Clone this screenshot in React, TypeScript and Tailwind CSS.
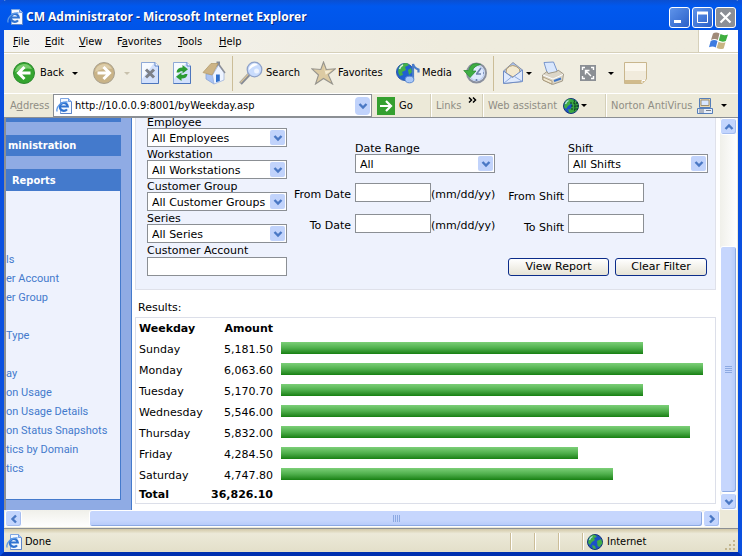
import type { ReactNode } from "react";

const tahoma = "font-['DejaVu_Sans_Condensed','Noto_Sans',sans-serif]";
const verdana = "font-['DejaVu_Sans',Verdana,sans-serif]";

/* ---------- icons ---------- */

function IePage({ className = "" }: { className?: string }) {
  return (
    <svg viewBox="0 0 16 16" className={`h-4 w-4 shrink-0 ${className}`} aria-hidden="true">
      <path d="M4.500 .5h8l3 3v12h-11z" fill="#f4f8ff" stroke="#7fa6e2" />
      <path d="M12.500 .5v3h3" fill="#a9c6f5" stroke="#6f9be0" />
      <path d="M15.500 4v11.500h-11" fill="none" stroke="#5f86c9" />
      <path d="M11 11.300a4 4 0 1 1 .8-2.800H4" fill="none" stroke="#2f72d0" strokeWidth="2.200" />
      <path d="M1.200 13.500C-.5 9.500 5 3 11.500 4" fill="none" stroke="#5b98e6" strokeWidth="1.300" />
    </svg>
  );
}

function Flag() {
  return (
    <svg viewBox="0 0 20 18" className="h-[18px] w-5" aria-hidden="true">
      <path d="M4 1.500q3-2 6.500 0L8.800 8q-3-1.800-6.800 0z" fill="#a08a78" />
      <path d="M11.500 2q3.500 2 7.500.5L16.800 9q-3.500 1.500-7-.5z" fill="#3fae3f" />
      <path d="M1.700 9q3.500-1.800 6.800 0L6.800 15.500q-3-2-6.800-.3z" fill="#3d7be0" />
      <path d="M9.500 9.800q3.500 1.800 7 .4l-1.800 6.300q-3.500 1.300-7-.5z" fill="#c8b483" />
    </svg>
  );
}

function RoundArrow({ back = false }: { back?: boolean }) {
  return (
    <svg viewBox="0 0 24 24" className="h-6 w-6 shrink-0" aria-hidden="true">
      <circle cx="12" cy="12" r="10.500" fill={back ? "#35a52f" : "#c9b387"} stroke={back ? "#2b8a2e" : "#a8a08e"} />
      <path d="M3 11a9 9 0 0 1 17-3q-7-2-17 3z" fill={back ? "#79cc6d" : "#ddcda9"} />
      {back ? (
        <path d="M18.500 12H7M12.500 6l-6 6 6 6" fill="none" stroke="#fff" strokeWidth="3" />
      ) : (
        <path d="M5.500 12H17M11.500 6l6 6-6 6" fill="none" stroke="#fff" strokeWidth="3" />
      )}
    </svg>
  );
}

function PageIcon({ children }: { children: ReactNode }) {
  return (
    <svg viewBox="0 0 20 24" className="h-6 w-5 shrink-0" aria-hidden="true">
      <path d="M1.500 1.500H15l3.500 3.500v17.500h-17z" fill="#d3e1fc" stroke="#8fa9d6" />
      <path d="M2 2h12L2 18z" fill="#f6faff" />
      <path d="M18.500 5v17.500h-17" fill="none" stroke="#4d76bd" />
      <path d="M15 1.500V5h3.500" fill="#fff" stroke="#5f86c9" />
      {children}
    </svg>
  );
}

function HomeIcon() {
  return (
    <svg viewBox="0 0 24 24" className="h-6 w-6 shrink-0" aria-hidden="true">
      <path d="M14.500 .5h3.500v6h-3.500z" fill="#858a94" />
      <path d="M4 13v5l8 5V13z" fill="#a9c3f4" stroke="#8ba5d3" strokeWidth=".8" />
      <path d="M10.500 14L16.500 4 22 11.500V19l-10 4z" fill="#eef4ff" stroke="#9fb4dc" strokeWidth=".8" />
      <path d="M9 2.500h7L10 14 1 11.500z" fill="#cdb486" stroke="#b39c70" strokeWidth=".8" />
      <path d="M16.500 3l6.500 9" stroke="#8c8f98" strokeWidth="1.500" />
      <path d="M14 13.500h3.800V20l-3.800 1.300z" fill="#2f6fcc" />
    </svg>
  );
}

function SearchIcon() {
  return (
    <svg viewBox="0 0 24 24" className="h-6 w-6 shrink-0" aria-hidden="true">
      <path d="M10 13.500L1.500 22.500" stroke="#858a95" strokeWidth="3.500" />
      <path d="M9.500 13L1.500 21.500" stroke="#d6c39b" strokeWidth="1.300" />
      <circle cx="15.500" cy="8.500" r="7.300" fill="#c9dcfd" stroke="#8fa2c8" strokeWidth="1.300" />
      <path d="M10 9a5.500 5.500 0 0 1 9-5q-5 1-9 5z" fill="#fff" />
      <circle cx="17.500" cy="10" r="2.500" fill="#eef4ff" />
    </svg>
  );
}

function StarIcon() {
  return (
    <svg viewBox="0 0 25 24" className="h-6 w-[25px] shrink-0" aria-hidden="true">
      <path d="M12.500 1l2.800 7.500 9-.7-7 5.900 4.200 9.300-9-5.500-8 5.500 3-9L.8 7.800l9 .7z" fill="#dccaa2" stroke="#96948d" strokeWidth="1.100" />
      <path d="M12.500 4l1.700 5.800 6.800-.6-6.300 4.500z" fill="#f4ebd2" />
    </svg>
  );
}

function GlobeShape() {
  return (
    <>
      <circle cx="8" cy="8" r="7.500" fill="#1c50c8" stroke="#173873" />
      <path d="M2 4q3-4 6-3l2 2-3 1 1 2-3 2-2 3-2-2z" fill="#40ad45" />
      <path d="M10 7l4-2 1.500 4-3 4-2-1zM5 11l3 1 1 3-3-.5z" fill="#40ad45" />
      <path d="M2.500 6a6 6 0 0 1 3-3.500" stroke="#b7e4ee" strokeWidth="1.200" fill="none" />
    </>
  );
}

function Globe({ grid = false }: { grid?: boolean }) {
  return (
    <svg viewBox="0 0 16 16" className="h-4 w-4 shrink-0" aria-hidden="true">
      <GlobeShape />
      {grid && (
        <>
          <path d="M8 1q7 1 7 7t-7 7q-3-2 0-5t-1-5z" fill="#3ba83f" />
          <path d="M7 5h8M8 8h8M8 11h7M11 2q2 6 0 12M14 4v8" fill="none" stroke="#0d3c28" strokeDasharray="2 1" />
        </>
      )}
    </svg>
  );
}

function MediaIcon() {
  return (
    <svg viewBox="0 0 24 24" className="h-6 w-6 shrink-0" aria-hidden="true">
      <circle cx="9" cy="11" r="8.500" fill="#2160d0" stroke="#2b58a8" />
      <path d="M3 6q3-4 8-4l2 2-4 2 1 3-4 2 1 3-3 1q-3-3-1-9z" fill="#43b048" />
      <path d="M12 9l3-2 1 4-3 3z" fill="#43b048" />
      <path d="M3.500 8Q4.500 5 7 4" fill="none" stroke="#d5f0e4" strokeWidth="1.500" />
      <path d="M17 18.500V3q1 4 5.500 5.500v3" fill="none" stroke="#4a7cc8" strokeWidth="2.200" />
      <ellipse cx="13.500" cy="18.500" rx="4.300" ry="3.300" fill="#a9c8f8" stroke="#5d8ad0" />
    </svg>
  );
}

function HistoryIcon() {
  return (
    <svg viewBox="0 0 24 24" className="h-6 w-6 shrink-0" aria-hidden="true">
      <circle cx="13.500" cy="12" r="9.500" fill="#dfeafd" stroke="#8a909e" strokeWidth="2" />
      <circle cx="13.500" cy="12" r="7.500" fill="none" stroke="#b6c9ee" />
      <path d="M13.500 13l4.500-6M13 13h5M13.500 18v2M20 12h1" stroke="#6d82ad" strokeWidth="1.600" />
      <path d="M17.500 3.500Q8 0 5.500 9.500H.8l6.200 7 6-6.500H9.500q1-5 8-6.500z" fill="#3fae43" stroke="#2c8e35" strokeWidth=".8" />
    </svg>
  );
}

function MailIcon() {
  return (
    <svg viewBox="0 0 22 24" className="h-6 w-[22px] shrink-0" aria-hidden="true">
      <path d="M1.500 10L11 1.500 20.500 9v11.500l-19 2z" fill="#a9c3f2" stroke="#8d95a6" />
      <path d="M4.500 8q6-7 13 0l.5 4-7 4-7-4z" fill="#f3e9cf" stroke="#b49c6d" />
      <path d="M1.500 10l9 6.500 10-7.500v11.500l-19 2z" fill="#dfeafd" stroke="#6e8cc5" />
      <path d="M1.500 22.500l8-6.500M20.500 20.500l-8-5" stroke="#8ca9dd" />
    </svg>
  );
}

function PrinterIcon() {
  return (
    <svg viewBox="0 0 24 24" className="h-6 w-6 shrink-0" aria-hidden="true">
      <path d="M3 1.500l9.500-.5 4 10-10 2z" fill="#d9e7fd" stroke="#7896cc" />
      <path d="M1.500 14L6 10.500l1 2 9-2 1-1.500 5.500 4-1 7-10 3.500L2 19z" fill="#dcd6c8" stroke="#a39b88" />
      <path d="M2 14l10 4L22 13.500" fill="none" stroke="#fff" />
      <path d="M2 16l9 4v3L2 19z" fill="#f1e8d0" stroke="#a39271" strokeWidth=".8" />
      <path d="M13 20l7-2.500" stroke="#3f75c6" strokeWidth="2" />
    </svg>
  );
}

function FullScreenIcon() {
  return (
    <svg viewBox="0 0 16 16" className="h-4 w-4 shrink-0" aria-hidden="true">
      <path d="M0 0h16v16H0z" fill="#8b8f94" />
      <path d="M2.500 5V2.500H5M11 2.500h2.500V5M13.500 11v2.500H11M5 13.500H2.500V11M5.500 9.500v-4h4M6 6l5 5" fill="none" stroke="#fff" strokeWidth="1.400" />
    </svg>
  );
}

function NoteIcon() {
  return (
    <svg viewBox="0 0 23 22" className="h-[22px] w-[23px] shrink-0" aria-hidden="true">
      <path d="M.5 .5h22V17L18 21.500H.5z" fill="#f1ebdc" stroke="#c9b68d" />
      <path d="M1 1h21v8H1z" fill="#faf6ec" />
      <path d="M1 18h21l-3.500 3.500H1z" fill="#d1bb8c" />
      <path d="M18 21v-2.500h3" fill="none" stroke="#fff" />
    </svg>
  );
}

function ComputerIcon() {
  return (
    <svg viewBox="0 0 16 16" className="h-4 w-4 shrink-0" aria-hidden="true">
      <path d="M2.500 .5h11v9h-11z" fill="#ead8ae" stroke="#557eb9" />
      <path d="M4 2h8v5.500H4z" fill="#d7e6ff" stroke="#9a8e74" />
      <path d="M.5 10.500h15v5H.5z" fill="#e5edfa" stroke="#557eb9" />
      <path d="M2 12h5M2 14h5M9 12.500h5" stroke="#777d88" />
    </svg>
  );
}

function Caret({ dim = false, className = "" }: { dim?: boolean; className?: string }) {
  return (
    <svg viewBox="0 0 6 3" className={`h-[3px] w-1.5 shrink-0 ${className}`} aria-hidden="true">
      <path d="M0 0h6L3 3z" fill={dim ? "#c8c1ac" : "#000"} />
    </svg>
  );
}

function Chevron({ turn = "" }: { turn?: string }) {
  return (
    <svg viewBox="0 0 10 10" className={`h-2.5 w-2.5 ${turn}`} aria-hidden="true">
      <path d="M1.500 3L5 6.500 8.500 3" fill="none" stroke="#4a78c4" strokeWidth="2.400" />
    </svg>
  );
}

/* ---------- browser chrome ---------- */

function CaptionButton({ label, close = false, children }: { label: string; close?: boolean; children: ReactNode }) {
  return (
    <button
      aria-label={label}
      className={`flex h-[21px] w-[21px] items-center justify-center rounded-[3px] border border-white ${
        close ? "bg-[#8b8f96]" : "bg-linear-to-br from-[#5f94ea] to-[#2a5fc8]"
      }`}
    >
      <svg viewBox="0 0 19 19" className="h-[19px] w-[19px]" fill="none" stroke="#fff" aria-hidden="true">
        {children}
      </svg>
    </button>
  );
}

function TitleBar() {
  return (
    <header className="flex h-[30px] items-center rounded-t-md bg-linear-to-b from-[#0a4fd0] via-[#0058ee] via-20% to-[#0054e8] pt-1 pr-1.5 pl-[7px]">
      <IePage />
      <h1 className="ml-[3px] flex-1 truncate font-['Open_Sans','Noto_Sans',sans-serif] text-[12px] leading-5 font-bold text-white [text-shadow:1px_1px_#0a2a80]">
        CM Administrator - Microsoft Internet Explorer
      </h1>
      <div className="flex gap-0.5">
        <CaptionButton label="Minimize">
          <path d="M4 13.500h7" strokeWidth="3" />
        </CaptionButton>
        <CaptionButton label="Maximize">
          <path d="M4.500 5.500h10v9h-10z" />
          <path d="M4 5h11" strokeWidth="3" />
        </CaptionButton>
        <CaptionButton label="Close" close>
          <path d="M4.500 4.500l10 10M14.500 4.500l-10 10" strokeWidth="2.200" />
        </CaptionButton>
      </div>
    </header>
  );
}

const menus = [
  ["", "F", "ile", "w-8"],
  ["", "E", "dit", "w-[34px]"],
  ["", "V", "iew", "w-[38px]"],
  ["F", "a", "vorites", "w-[61px]"],
  ["", "T", "ools", "w-[41px]"],
  ["", "H", "elp", "w-8"],
];

function MenuBar() {
  return (
    <nav className="flex h-[23px] border-b border-[#d6d0ba] bg-linear-to-r from-[#f5f4f2] to-[#efecde] to-60% pl-[9px]">
      {menus.map(([before, key, after, width]) => (
        <button key={key} className={`${width} h-[22px] pt-0.5 text-left`}>
          {before}
          <span className="underline">{key}</span>
          {after}
        </button>
      ))}
      <div className="ml-auto flex w-10 items-center justify-center border-l border-[#d6d0ba] bg-white">
        <Flag />
      </div>
    </nav>
  );
}

function Tool({ label, width, children }: { label: string; width: string; children: ReactNode }) {
  return (
    <button aria-label={label} className={`flex shrink-0 items-center ${width}`}>
      {children}
    </button>
  );
}

function ToolBar() {
  return (
    <div className="flex h-10 items-center border-t border-white pl-2 pb-px">
      <Tool label="Back" width="w-20">
        <RoundArrow back />
        <span className="ml-1 flex-1 text-left">Back</span>
        <Caret className="mr-3.5" />
      </Tool>
      <Tool label="Forward" width="w-12">
        <RoundArrow />
        <Caret dim className="ml-2" />
      </Tool>
      <Tool label="Stop" width="w-8">
        <PageIcon>
          <path d="M6 8.500l8 8M14 8.500l-8 8" stroke="#7c8088" strokeWidth="3" />
        </PageIcon>
      </Tool>
      <Tool label="Refresh" width="w-[30px]">
        <PageIcon>
          <path d="M4.500 11.500Q5 6.500 10.500 6.500V4l5.500 4.200-5.500 4.300V10Q7.500 10 7 11.500zM15.500 13Q15 17.500 9.500 17.500V20L4 15.800l5.500-4.300V14q3 0 3.500-1z" fill="#2c9c33" />
        </PageIcon>
      </Tool>
      <Tool label="Home" width="w-[30px]">
        <HomeIcon />
      </Tool>
      <span className="mr-1.5 h-[35px] w-px bg-[#cbbd98]" />
      <Tool label="Search" width="w-[72px]">
        <SearchIcon />
        <span className="ml-[3px]">Search</span>
      </Tool>
      <Tool label="Favorites" width="w-[85px]">
        <StarIcon />
        <span className="ml-0.5">Favorites</span>
      </Tool>
      <Tool label="Media" width="w-[67px]">
        <MediaIcon />
        <span className="ml-0.5">Media</span>
      </Tool>
      <Tool label="History" width="w-[30px]">
        <HistoryIcon />
      </Tool>
      <span className="mr-2 h-[35px] w-px bg-[#cbbd98]" />
      <Tool label="Mail" width="w-[39px]">
        <MailIcon />
        <Caret className="ml-0.5" />
      </Tool>
      <Tool label="Print" width="w-[39px]">
        <PrinterIcon />
      </Tool>
      <Tool label="Full screen" width="w-11">
        <FullScreenIcon />
        <Caret className="ml-3" />
      </Tool>
      <Tool label="Discuss" width="w-6">
        <NoteIcon />
      </Tool>
    </div>
  );
}

function AddressBar() {
  return (
    <div className="flex h-6 items-center border-t border-white bg-[#ece9d8] text-[#8f8d84]">
      <label htmlFor="address" className="w-[49px] pl-1.5">
        A<span className="underline">d</span>dress
      </label>
      <div className="flex h-[23px] flex-1 items-center border border-[#8b8f94] bg-white pr-px pl-0.5">
        <IePage />
        <input
          id="address"
          defaultValue="http://10.0.0.9:8001/byWeekday.asp"
          className="ml-[3px] min-w-0 flex-1 text-black outline-none"
        />
        <button aria-label="Show addresses" className="flex h-[18px] w-[15px] items-center justify-center rounded-sm bg-[#c1d3fb]">
          <Chevron />
        </button>
      </div>
      <button className="flex h-full w-[59px] items-center gap-1 pl-[5px] text-black">
        <svg viewBox="0 0 18 18" className="h-[18px] w-[18px]" aria-hidden="true">
          <path d="M0 0h18v18H0z" fill="#34a02f" />
          <path d="M3 9h10M9 4l5 5-5 5" fill="none" stroke="#fff" strokeWidth="2.200" />
        </svg>
        Go
      </button>
      <div className="flex h-full w-[52px] items-center border-l border-white pl-1 shadow-[-1px_0_#d4cfb8]">
        Links
        <button aria-label="More links" className="ml-auto flex h-full items-start pt-[3px] pr-1.5">
          <svg viewBox="0 0 9 6" className="h-1.5 w-[9px]" fill="none" stroke="#000" strokeWidth="1.500" aria-hidden="true">
            <path d="M1 .5L3.500 3 1 5.500M5 .5L7.500 3 5 5.500" />
          </svg>
        </button>
      </div>
      <button className="flex h-full w-[123px] items-center border-l border-white pl-1 shadow-[-1px_0_#d4cfb8]">
        <span className="w-[75px] text-left whitespace-nowrap">Web assistant</span>
        <Globe grid />
        <Caret className="ml-0.5" />
      </button>
      <button className="flex h-full w-[132px] items-center border-l border-white pl-1 shadow-[-1px_0_#d4cfb8]">
        <span className="w-[86px] text-left whitespace-nowrap">Norton AntiVirus</span>
        <ComputerIcon />
        <Caret className="ml-2" />
      </button>
    </div>
  );
}

/* ---------- scroll bars ---------- */

function ScrollButton({ label, turn }: { label: string; turn: string }) {
  return (
    <button
      aria-label={label}
      className="flex h-[17px] w-[17px] shrink-0 items-center justify-center rounded-[3px] border border-white bg-[#c3d5fd] shadow-[inset_-1px_-1px_#a5bdf0]"
    >
      <Chevron turn={turn} />
    </button>
  );
}

function VerticalScroll() {
  return (
    <div className="flex w-[17px] shrink-0 flex-col bg-linear-to-r from-[#f0f0ea] to-white">
      <ScrollButton label="Scroll up" turn="rotate-180" />
      <div className="grow-[115]" />
      <div className="flex grow-[245] flex-col items-center justify-center gap-px rounded-[3px] border border-white bg-linear-to-r from-[#c6d6fd] from-60% to-[#b5cafa] shadow-[inset_-1px_-1px_#8ca9e2]">
        {[0, 1, 2, 3].map((n) => (
          <span key={n} className="h-px w-[7px] bg-[#8ca9e2]" />
        ))}
      </div>
      <ScrollButton label="Scroll down" turn="" />
    </div>
  );
}

function HorizontalScroll() {
  return (
    <div className="flex h-[18px] bg-[#ece9d8] pr-px pl-px">
      <div className="flex h-[17px] flex-1 bg-linear-to-b from-[#f0f0ea] to-white">
        <ScrollButton label="Scroll left" turn="rotate-90" />
        <div className="grow-[68]" />
        <div className="flex grow-[614] items-center justify-center gap-px rounded-[3px] border border-white bg-linear-to-b from-[#c6d6fd] from-60% to-[#b5cafa] shadow-[inset_-1px_-1px_#8ca9e2]">
          {[0, 1, 2, 3].map((n) => (
            <span key={n} className="h-[7px] w-px bg-[#8ca9e2]" />
          ))}
        </div>
        <ScrollButton label="Scroll right" turn="-rotate-90" />
      </div>
      <div className="w-[17px]" />
    </div>
  );
}

/* ---------- page ---------- */

const reportLinks = [
  "ls",
  "er Account",
  "er Group",
  "",
  "Type",
  "",
  "ay",
  "on Usage",
  "on Usage Details",
  "on Status Snapshots",
  "tics by Domain",
  "tics",
];

function Sidebar() {
  return (
    <aside className="flex w-[126px] shrink-0 flex-col border-r border-[#447acc] bg-[#8fabe4] pr-2.5 pb-2.5">
      <div className="h-1 bg-[#447acc]" />
      <h2 className="mt-[13px] h-[21px] bg-[#447acc] pl-0.5 leading-[22px] font-bold text-white">ministration</h2>
      <h2 className="mt-[13px] h-[22px] bg-[#447acc] pl-1.5 leading-[23px] font-bold text-white">Reports</h2>
      <ul className="flex-1 border-r border-b border-[#447acc] bg-[#eef2fd] pt-[59px] font-[Roboto,'Noto_Sans',sans-serif] text-[#447acc]">
        {reportLinks.map((text, n) => (
          <li key={n} className="h-[19px] leading-[19px] whitespace-nowrap">
            {text && <a href="#report">{text}</a>}
          </li>
        ))}
      </ul>
    </aside>
  );
}

function Picker({ id, label, option, tight = false }: { id: string; label: string; option: string; tight?: boolean }) {
  return (
    <div className="w-[140px]">
      <label htmlFor={id} className={`block ${tight ? "h-2.5 leading-[10px]" : "h-[13px] leading-[15px]"}`}>
        {label}
      </label>
      <div className="relative">
        <select
          id={id}
          className="block h-[19px] w-full appearance-none overflow-hidden border border-[#8b8f94] bg-white pt-0.5 pr-[17px] pl-1 leading-[15px] outline-none"
        >
          <option>{option}</option>
        </select>
        <span className="pointer-events-none absolute top-0.5 right-0.5 flex h-[15px] w-[15px] items-center justify-center rounded-[2px] bg-[#c1d3fb]">
          <Chevron />
        </span>
      </div>
    </div>
  );
}

function Field({ id, label, hint, labelStyle }: { id: string; label: string; hint?: string; labelStyle: string }) {
  return (
    <div className="flex h-[19px] items-center whitespace-nowrap">
      <label htmlFor={id} className={`${labelStyle} mr-1 text-right`}>
        {label}
      </label>
      <input id={id} className="h-[19px] w-[76px] border border-[#8b8f94] bg-white px-1 outline-none" />
      {hint && <span className="pt-1">{hint}</span>}
    </div>
  );
}

function FormButton({ children, width }: { children: ReactNode; width: string }) {
  return (
    <button
      type="button"
      className={`${width} h-[18px] rounded-[3px] border border-[#0b2c8a] bg-linear-to-b from-white to-[#e6e3d6] leading-4`}
    >
      {children}
    </button>
  );
}

function FilterForm() {
  return (
    <form className="flex border-x border-b border-[#dfe1ea] bg-[#eef2fd] pr-[7px] pb-[13px] pl-[11px]">
      <div>
        <Picker id="employee" label="Employee" option="All Employees" tight />
        <Picker id="workstation" label="Workstation" option="All Workstations" />
        <Picker id="group" label="Customer Group" option="All Customer Groups" />
        <Picker id="series" label="Series" option="All Series" />
        <label htmlFor="account" className="block h-3.5 leading-[15px]">
          Customer Account
        </label>
        <input id="account" className="block h-[19px] w-[140px] border border-[#8b8f94] bg-white px-1 outline-none" />
      </div>
      <div className="flex flex-1 flex-col justify-between pt-[23px]">
        <div className="flex justify-between">
          <div>
            <div className="pl-[68px]">
              <Picker id="range" label="Date Range" option="All" />
            </div>
            <div className="mt-2.5 flex flex-col gap-3">
              <Field id="from-date" label="From Date" hint="(mm/dd/yy)" labelStyle="w-16 pt-1" />
              <Field id="to-date" label="To Date" hint="(mm/dd/yy)" labelStyle="w-16 pt-1" />
            </div>
          </div>
          <div>
            <div className="pl-16">
              <Picker id="shift" label="Shift" option="All Shifts" />
            </div>
            <div className="mt-2.5 flex flex-col gap-3">
              <Field id="from-shift" label="From Shift" labelStyle="w-[60px] pt-2" />
              <Field id="to-shift" label="To Shift" labelStyle="w-[60px] pt-2" />
            </div>
          </div>
        </div>
        <div className="flex justify-end gap-1.5 pr-px">
          <FormButton width="w-[101px]">View Report</FormButton>
          <FormButton width="w-[92px]">Clear Filter</FormButton>
        </div>
      </div>
    </form>
  );
}

const fullBar = 422;
const rows = [
  { day: "Sunday", amount: "5,181.50", bar: 362 },
  { day: "Monday", amount: "6,063.60", bar: 422 },
  { day: "Tuesday", amount: "5,170.70", bar: 362 },
  { day: "Wednesday", amount: "5,546.00", bar: 388 },
  { day: "Thursday", amount: "5,832.00", bar: 409 },
  { day: "Friday", amount: "4,284.50", bar: 297 },
  { day: "Saturday", amount: "4,747.80", bar: 332 },
];

function Results() {
  return (
    <section className="pb-1.5">
      <h3 className="mt-[11px] mb-0.5 pl-[3px] leading-[14px]">Results:</h3>
      <div className="border border-[#dcdfe9] pr-3 pl-[3px]">
        <table className="w-full border-collapse">
          <thead>
            <tr className="h-5">
              <th className="w-[70px] p-0 pt-0.5 text-left">Weekday</th>
              <th className="w-16 p-0 pt-0.5 text-right">Amount</th>
              <th className="p-0" aria-label="Share" />
            </tr>
          </thead>
          <tbody>
            {rows.map((row) => (
              <tr key={row.day} className="h-[21px]">
                <td className="p-0 pt-0.5">{row.day}</td>
                <td className="p-0 pt-0.5 text-right">{row.amount}</td>
                <td className="p-0 pb-0.5 pl-2">
                  <div
                    className="h-3 bg-linear-to-b from-[#7ccf78] via-[#4fb04c] to-[#15800f]"
                    style={{ width: `${(row.bar / fullBar) * 100}%` }}
                  />
                </td>
              </tr>
            ))}
          </tbody>
          <tfoot>
            <tr className="h-[18px] font-bold">
              <td className="p-0 pt-0.5">Total</td>
              <td className="p-0 pt-0.5 text-right">36,826.10</td>
              <td className="p-0" />
            </tr>
          </tfoot>
        </table>
      </div>
    </section>
  );
}

function StatusBar() {
  return (
    <footer className="flex h-6 items-center border-t border-[#8b8f94] bg-linear-to-b from-[#d2c8a6] via-[#ece9d8] via-20% to-[#e3dfc9] pt-0.5 pl-0.5 text-black">
      <IePage />
      <span className="ml-[3px] flex-1">Done</span>
      {[0, 1, 2].map((n) => (
        <span key={n} className="h-[17px] w-6 border-l border-[#cbbd98] shadow-[inset_1px_0_#fff]" />
      ))}
      <span className="flex h-[17px] w-[143px] items-center gap-1 border-l border-[#cbbd98] pl-1 shadow-[inset_1px_0_#fff]">
        <Globe />
        Internet
      </span>
      <svg viewBox="0 0 12 12" className="mr-px h-3 w-3 self-end" fill="#c3b68f" aria-hidden="true">
        <path d="M8 0h2v2H8zM4 4h2v2H4zM8 4h2v2H8zM0 8h2v2H0zM4 8h2v2H4zM8 8h2v2H8z" />
      </svg>
    </footer>
  );
}

export default function App() {
  return (
    <div className={`${tahoma} flex min-h-screen flex-col border-x-4 border-b-4 border-[#0a50e0] border-b-[#0030b0] bg-[#f0ede0] text-[11px] leading-4 text-black`}>
      <div className="-mx-1">
        <TitleBar />
      </div>
      <MenuBar />
      <ToolBar />
      <AddressBar />
      <div className="flex flex-1 border-t border-l-2 border-[#8b8f94] bg-white">
        <Sidebar />
        <main className={`${verdana} ml-[3px] min-w-0 flex-1`}>
          <FilterForm />
          <Results />
        </main>
        <div className="flex border-r border-[#ece9d8] pl-1">
          <VerticalScroll />
        </div>
      </div>
      <HorizontalScroll />
      <StatusBar />
    </div>
  );
}
